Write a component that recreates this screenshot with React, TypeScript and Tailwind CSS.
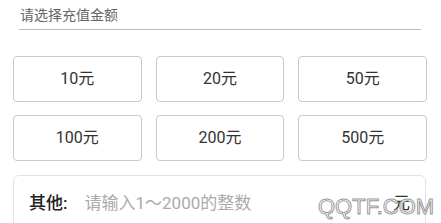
const amounts = ['10元', '20元', '50元', '100元', '200元', '500元']

export default function App() {
  return (
    <div
      className="relative w-[441px] h-[223px] overflow-hidden bg-white"
      style={{ fontFamily: 'Roboto, "Noto Sans CJK SC", sans-serif' }}
    >
      {/* Title */}
      <div className="mx-[19px] w-[402px] h-[30px] border-b border-[#bdbdbd] pl-[1px] pt-[5px] text-[14px] leading-[20px] text-[#666]">
        请选择充值金额
      </div>

      {/* Amount grid */}
      <div className="ml-[13px] mt-[26px] w-[414px] grid grid-cols-3 gap-x-[14px] gap-y-[13px]">
        {amounts.map((a) => (
          <button
            key={a}
            className="h-[46px] rounded-[4px] border border-[#c9c9c9] bg-white text-[16px] text-[#333] flex items-center justify-center"
          >
            {a}
          </button>
        ))}
      </div>

      {/* Other amount */}
      <div className="ml-[13px] mt-[14px] w-[413px] h-[70px] rounded-[6px] border border-[#e3e3e3] flex items-start pt-[15px] pl-[15px] pr-[15px]">
        <span className="text-[17px] font-medium text-[#222]">其他:</span>
        <span className="ml-[17px] text-[17px] text-[#aaa]">请输入1～2000的整数</span>
        <span className="ml-auto text-[17px] text-[#333]">元</span>
      </div>

      {/* Watermark */}
      <div className="absolute left-[318px] top-[194px] text-[22px] leading-[26px] text-white [-webkit-text-stroke:1px_#9a9a9a] font-['Liberation_Sans',sans-serif]">
        QQTF.COM
      </div>
    </div>
  )
}
